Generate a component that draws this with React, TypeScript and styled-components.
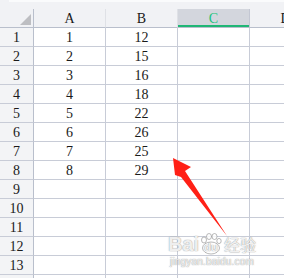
import React from "react";
import styled, { createGlobalStyle } from "styled-components";

const GlobalStyle = createGlobalStyle`
  html, body {
    margin: 0;
    padding: 0;
    background: #ffffff;
    overflow: hidden;
  }
`;

const Page = styled.div`
  position: relative;
  width: 284px;
  height: 278px;
  overflow: hidden;
  background: #ffffff;
  font-family: "Liberation Serif", "Times New Roman", serif;
  font-size: 14px;
  color: #1a1a1a;
`;

const TopStrip = styled.div`
  height: 9px;
  background: #f1f2f5;
  position: relative;
  &::before {
    content: "";
    position: absolute;
    left: 9px;
    right: 0;
    top: 0;
    height: 2px;
    background: #fafbfc;
  }
`;

const Sheet = styled.div`
  display: grid;
  grid-template-columns: 34px 72px 72px 72px 72px;
  grid-auto-rows: 19px;
`;

const Corner = styled.div`
  background: #f1f2f5;
  border-right: 1px solid #b9bfcc;
  border-bottom: 1px solid #b9bfcc;
  display: flex;
  align-items: flex-end;
  justify-content: flex-end;
  padding: 0 2px 2px 0;
  box-sizing: border-box;
`;

const Triangle = styled.div`
  width: 11px;
  height: 11px;
  background: #bdbec2;
  clip-path: polygon(100% 0, 100% 100%, 0 100%);
`;

const ColHead = styled.div<{ $active?: boolean }>`
  background: ${(p) => (p.$active ? "#d3d6dd" : "#f1f2f5")};
  border-right: 1px solid ${(p) => (p.$active ? "#c3c7d3" : "#dfe1e6")};
  border-bottom: 1px solid #b9bfcc;
  box-shadow: ${(p) => (p.$active ? "inset 0 -2px 0 #1fb675" : "none")};
  color: ${(p) => (p.$active ? "#20c47c" : "#1a1a1a")};
  display: flex;
  align-items: center;
  justify-content: center;
  padding-top: 1px;
  box-sizing: border-box;
`;

const RowHead = styled.div`
  background: #f3f4f6;
  border-right: 1px solid #b9bfcc;
  border-bottom: 1px solid #c8ccd7;
  display: flex;
  align-items: center;
  justify-content: center;
  padding-top: 2px;
  box-sizing: border-box;
`;

const Cell = styled.div`
  border-right: 1px solid #c8ccd7;
  border-bottom: 1px solid #c8ccd7;
  display: flex;
  align-items: center;
  justify-content: center;
  padding-top: 2px;
  box-sizing: border-box;
`;

const Arrow = styled.svg`
  position: absolute;
  left: 0;
  top: 0;
  pointer-events: none;
`;

const Watermark = styled.div`
  position: absolute;
  left: 166px;
  top: 233px;
  width: 92px;
  display: flex;
  flex-direction: column;
  align-items: center;
  color: rgba(255, 255, 255, 0.85);
  text-shadow: 0 0 1px rgba(140, 140, 140, 0.7), 0 0 1px rgba(140, 140, 140, 0.7);
  font-family: "Liberation Sans", "Noto Sans CJK SC", sans-serif;
  pointer-events: none;
`;

const Brand = styled.div`
  display: flex;
  align-items: center;
  font-size: 20px;
  font-weight: bold;
  line-height: 22px;
`;

const Paw = styled.span`
  position: relative;
  display: inline-flex;
  align-items: flex-end;
  justify-content: center;
  width: 24px;
  height: 22px;
  font-size: 11px;
  line-height: 13px;
  padding-bottom: 1px;
  box-sizing: border-box;
  & > svg {
    position: absolute;
    left: 0;
    top: 0;
  }
  & > span {
    position: relative;
  }
`;

const Small = styled.div`
  font-size: 10px;
  line-height: 12px;
  margin-top: 1px;
  letter-spacing: 0.2px;
`;

const Cjk = styled.span`
  font-family: "Noto Sans CJK SC", sans-serif;
  font-size: 16px;
  font-weight: normal;
  margin-left: 1px;
`;

const data: [string, string][] = [
  ["1", "12"],
  ["2", "15"],
  ["3", "16"],
  ["4", "18"],
  ["5", "22"],
  ["6", "26"],
  ["7", "25"],
  ["8", "29"],
];

export default function App() {
  const rows = Array.from({ length: 14 }, (_, i) => i + 1);
  return (
    <Page>
      <GlobalStyle />
      <TopStrip />
      <Sheet>
        <Corner>
          <Triangle />
        </Corner>
        <ColHead>A</ColHead>
        <ColHead>B</ColHead>
        <ColHead $active>C</ColHead>
        <ColHead>D</ColHead>
        {rows.map((r) => (
          <React.Fragment key={r}>
            <RowHead>{r}</RowHead>
            <Cell>{data[r - 1]?.[0] ?? ""}</Cell>
            <Cell>{data[r - 1]?.[1] ?? ""}</Cell>
            <Cell />
            <Cell />
          </React.Fragment>
        ))}
      </Sheet>
      <Watermark>
        <Brand>
          <span>Bai</span>
          <Paw>
            <svg width="24" height="22" viewBox="0 0 24 22">
              <g fill="rgba(255,255,255,0.8)" stroke="rgba(140,140,140,0.6)" strokeWidth="1">
                <ellipse cx="12" cy="15" rx="8.5" ry="6" />
                <ellipse cx="5" cy="7" rx="2.5" ry="3" />
                <ellipse cx="10" cy="3.5" rx="2.5" ry="3" />
                <ellipse cx="15.5" cy="3.5" rx="2.5" ry="3" />
                <ellipse cx="20" cy="8" rx="2.2" ry="2.6" />
              </g>
            </svg>
            <span>du</span>
          </Paw>
          <Cjk>经验</Cjk>
        </Brand>
        <Small>jingyan.baidu.com</Small>
      </Watermark>
      <Arrow width="284" height="278" viewBox="0 0 284 278">
        <polygon
          points="173,158 191,167 185,171 227,236 181,177 175,175"
          fill="#ff2016"
        />
      </Arrow>
    </Page>
  );
}
